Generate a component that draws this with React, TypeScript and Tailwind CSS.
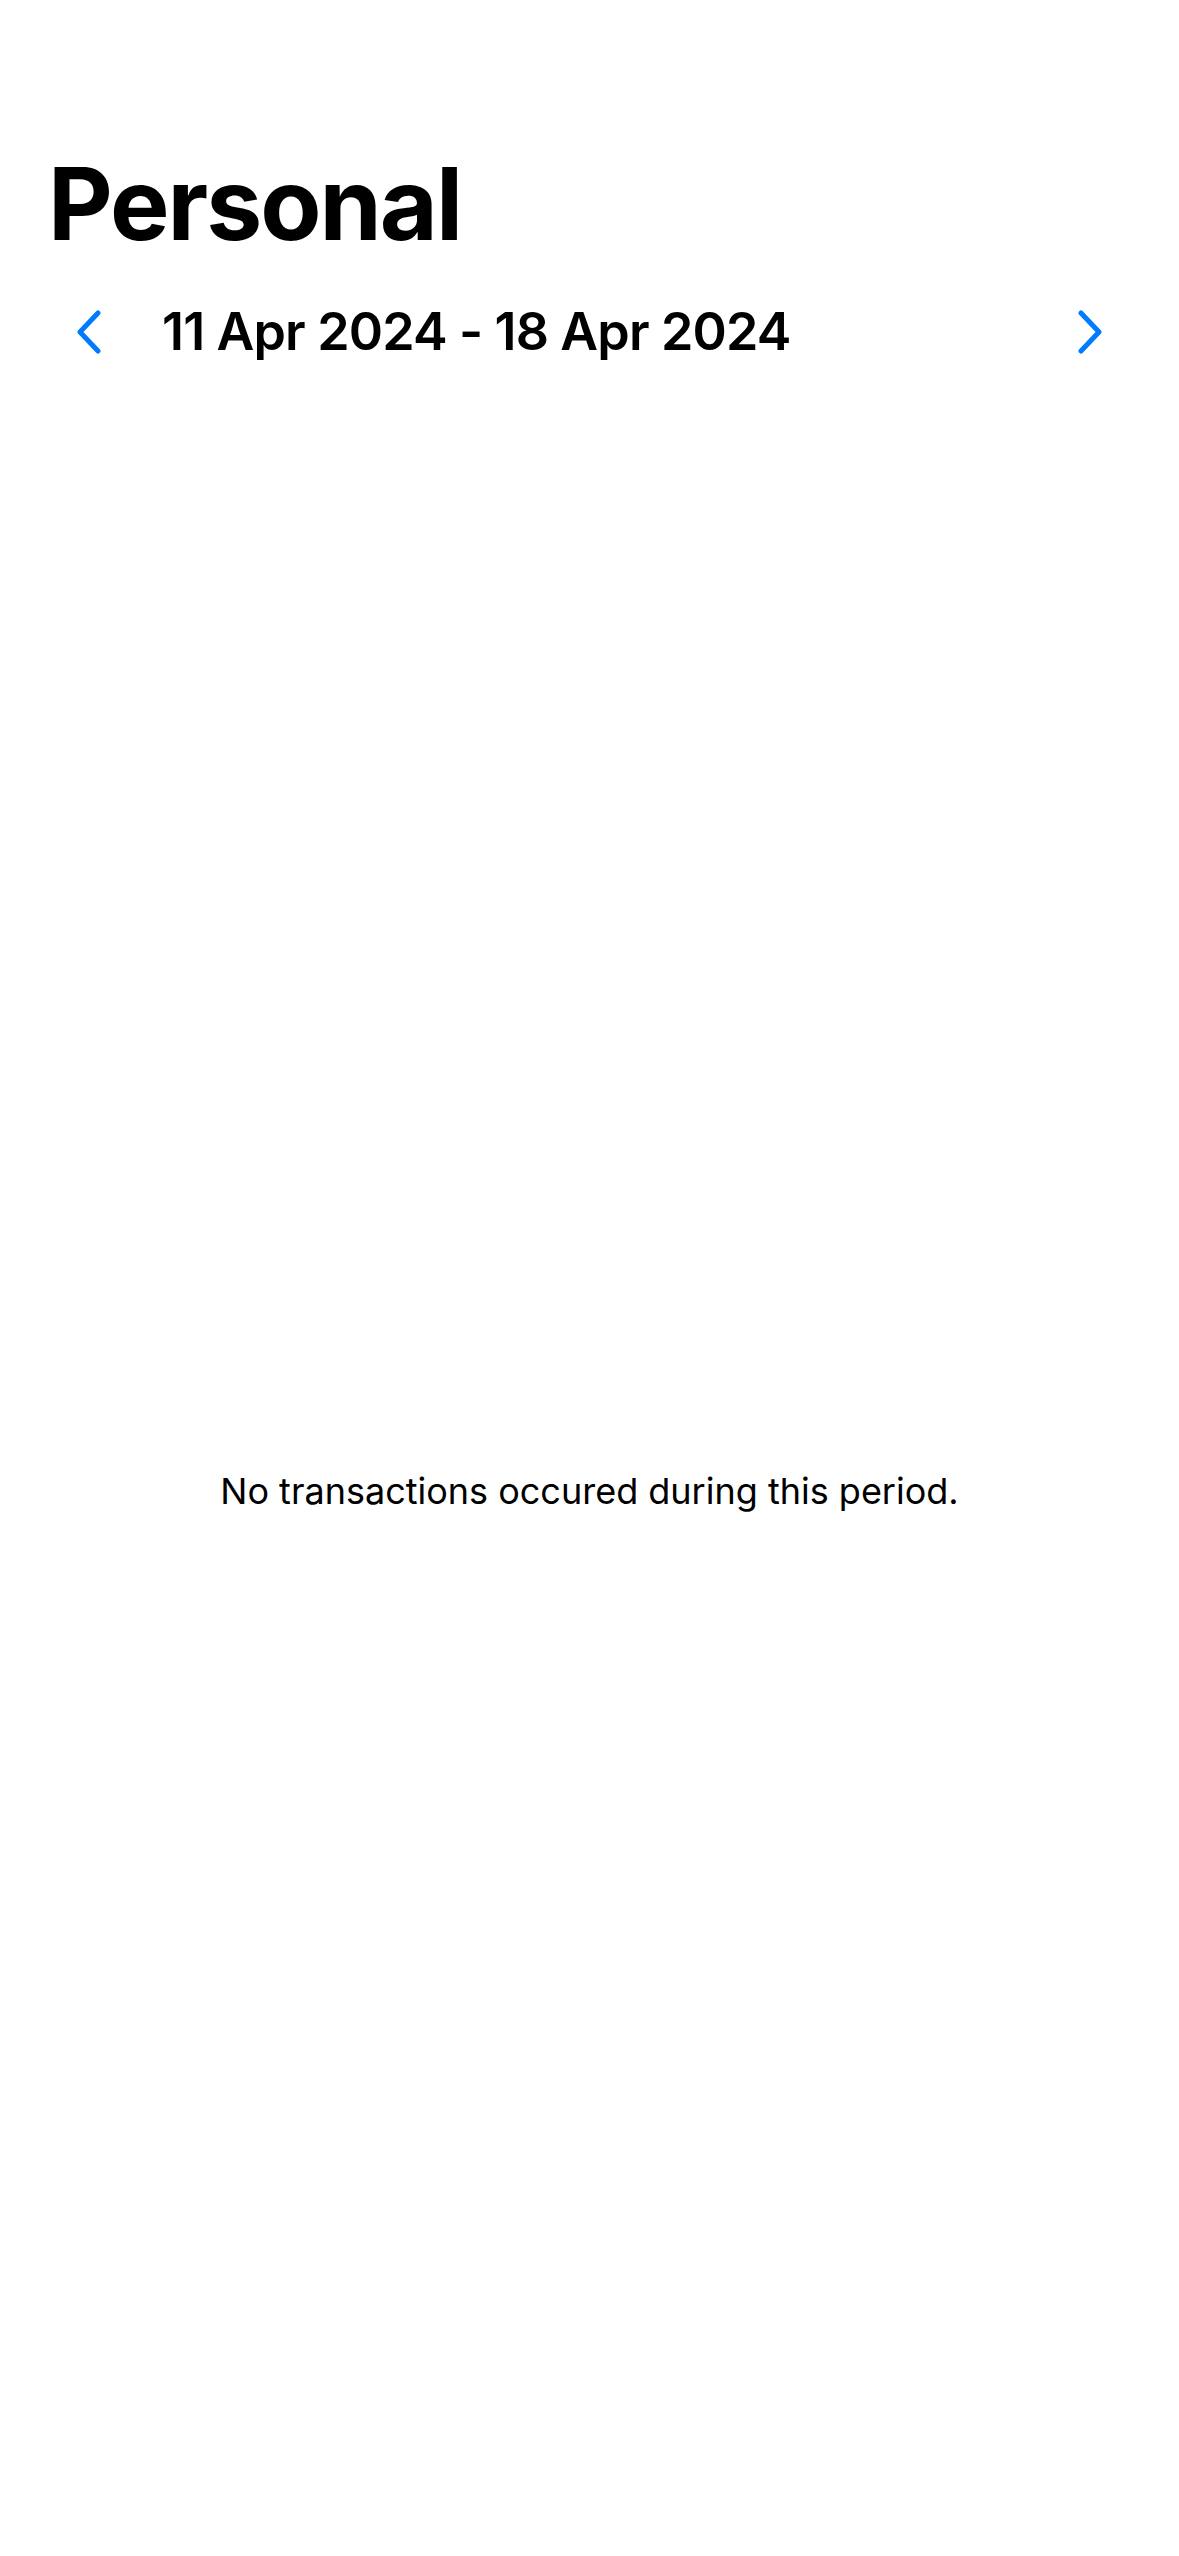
import React from "react";

const Chevron: React.FC<{ dir: "left" | "right" }> = ({ dir }) => (
	<svg
		width="24"
		height="44"
		viewBox="0 0 24 44"
		fill="none"
		stroke="#007AFF"
		strokeWidth="5"
		strokeLinecap="round"
		strokeLinejoin="round">
		{dir === "left" ? (
			<path d="M21 3 L3 22 L21 41" />
		) : (
			<path d="M3 3 L21 22 L3 41" />
		)}
	</svg>
);

export default function App() {
	return (
		<div className="min-h-[2556px] w-full bg-white flex flex-col text-black font-['Inter','Liberation_Sans',sans-serif]">
			<div className="pt-[154px] px-12">
				<h1 className="text-[100px] font-bold leading-none tracking-[-2px]">
					Personal
				</h1>
			</div>

			<div className="flex items-center px-[77px] mt-[52px] h-[52px]">
				<button className="flex items-center">
					<Chevron dir="left" />
				</button>
				<span className="flex-1 ml-[61px] text-[52px] font-semibold leading-none tracking-[-0.85px]">
					11 Apr 2024 - 18 Apr 2024
				</span>
				<button className="flex items-center">
					<Chevron dir="right" />
				</button>
			</div>

			<div className="flex-1 flex items-center justify-center pt-[68px]">
				<p className="text-[36px] leading-none">
					No transactions occured during this period.
				</p>
			</div>
		</div>
	);
}
